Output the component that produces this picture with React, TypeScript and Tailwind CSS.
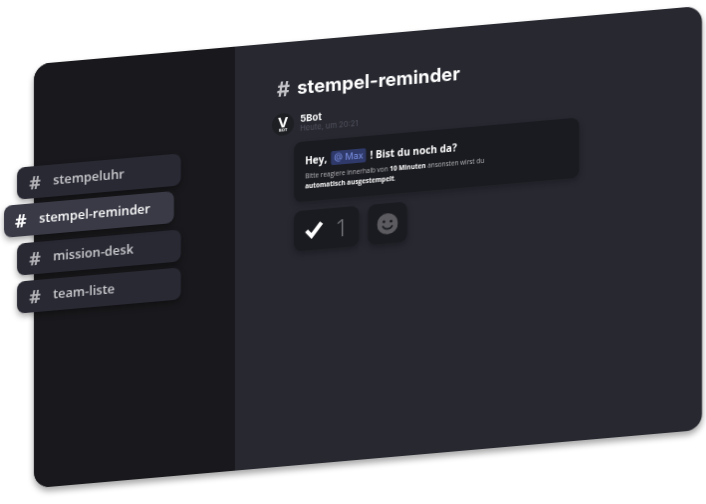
const channels = ['stempeluhr', 'stempel-reminder', 'mission-desk', 'team-liste']

const ChannelItem = ({ name, active }: { name: string; active: boolean }) => (
  <li
    className={`flex h-8 items-center rounded-lg font-semibold shadow-[0_3px_6px_rgba(0,0,0,0.35)] ${
      active
        ? '-ml-[13px] w-[170px] -translate-y-px bg-[#393a46] pl-[11px] text-white'
        : 'w-[164px] bg-[#282933] pl-[12px] text-[#cbcbcf]'
    }`}
  >
    <span className={`w-6 text-[18px] font-bold ${active ? 'text-white' : 'text-[#b4b4b8]'}`}>#</span>
    <span className="text-[12.75px]">{name}</span>
  </li>
)

const BotAvatar = () => (
  <div className="flex h-[22px] w-[22px] shrink-0 flex-col items-center justify-center rounded-full bg-[#1e1f23] text-white">
    <span className="text-[15px] leading-[11px] font-bold">V</span>
    <span className="text-[4px] leading-[5px] font-bold">BOT</span>
  </div>
)

const SmileIcon = () => (
  <svg width="21" height="21" viewBox="0 0 20 20">
    <circle cx="10" cy="10" r="10" fill="#5c5c60" />
    <circle cx="6.6" cy="7.8" r="1.3" fill="#1b1c21" />
    <circle cx="13.4" cy="7.8" r="1.3" fill="#1b1c21" />
    <path d="M5.6 12.2c1 1.9 2.6 2.7 4.4 2.7s3.4-.8 4.4-2.7" fill="none" stroke="#1b1c21" strokeWidth="1.5" strokeLinecap="round" />
  </svg>
)

const CheckIcon = () => (
  <svg width="20" height="18" viewBox="0 0 20 18">
    <path d="M2.5 9.5 7.5 15 17.5 2.5" fill="none" stroke="#ffffff" strokeWidth="4" />
  </svg>
)

export default function App() {
  return (
    <div className="h-[504px] w-[706px] overflow-hidden bg-white pt-[35px] pl-[34px] font-['Open_Sans',sans-serif]">
      <div className="flex h-[424px] w-[668px] -skew-y-[5deg] rounded-2xl bg-[#272830] shadow-[0_4px_6px_rgba(0,0,0,0.35)] will-change-transform">
        <aside className="w-[201px] shrink-0 rounded-l-2xl bg-[#19191d] pt-[102px]">
          <ul className="-ml-[17px] flex flex-col gap-[6px]">
            {channels.map((name) => (
              <ChannelItem key={name} name={name} active={name === 'stempel-reminder'} />
            ))}
          </ul>
        </aside>

        <main className="flex-1 pt-[33px] pl-[37px]">
          <h1 className="flex h-7 items-center font-['Inter',sans-serif] text-[18.5px] font-bold text-white">
            <span className="ml-[5px] w-[20px] text-[20px] text-[#c4c4c8]">#</span>
            stempel-reminder
          </h1>

          <div className="mt-[10px] flex items-center gap-[6px]">
            <BotAvatar />
            <div className="font-['Inter',sans-serif]">
              <div className="text-[9.5px] leading-[11px] font-bold text-white">5Bot</div>
              <div className="text-[7.5px] leading-[10px] font-medium text-[#4c4d57]">Heute, um 20:21</div>
            </div>
          </div>

          <div className="mt-[8px] ml-[22px] h-[60px] w-[285px] rounded-lg bg-[#1a1b20] pt-[12px] pl-[11px] shadow-[0_3px_6px_rgba(0,0,0,0.2)]">
            <div className="flex items-center text-[10px] leading-[14px] font-bold text-white">
              Hey,
              <span className="mx-[4px] w-[35px] rounded-[2px] bg-[#2f3a6b] text-center font-['Inter',sans-serif] text-[9px] font-normal text-[#7f93e6]">@ Max</span>
              ! Bist du noch da?
            </div>
            <p className="mt-[4px] w-[195px] text-[6.4px] leading-[10px] text-[#b5b5b9]">
              Bitte reagiere innerhalb von <b className="font-bold text-white">10 Minuten</b> ansonsten wirst du{' '}
              <b className="font-bold text-white">automatisch ausgestempelt</b>.
            </p>
          </div>

          <div className="mt-[9px] ml-[22px] flex gap-[9px]">
            <div className="flex h-10 w-[65px] items-center rounded-lg bg-[#1a1b20] pl-[10px] shadow-[0_3px_6px_rgba(0,0,0,0.25)]">
              <CheckIcon />
              <span className="ml-[11px] text-[24px] leading-none font-light text-[#85858a]">1</span>
            </div>
            <div className="flex h-10 w-[39px] items-center justify-center rounded-lg bg-[#1a1b20] shadow-[0_3px_6px_rgba(0,0,0,0.25)]">
              <SmileIcon />
            </div>
          </div>
        </main>
      </div>
    </div>
  )
}
